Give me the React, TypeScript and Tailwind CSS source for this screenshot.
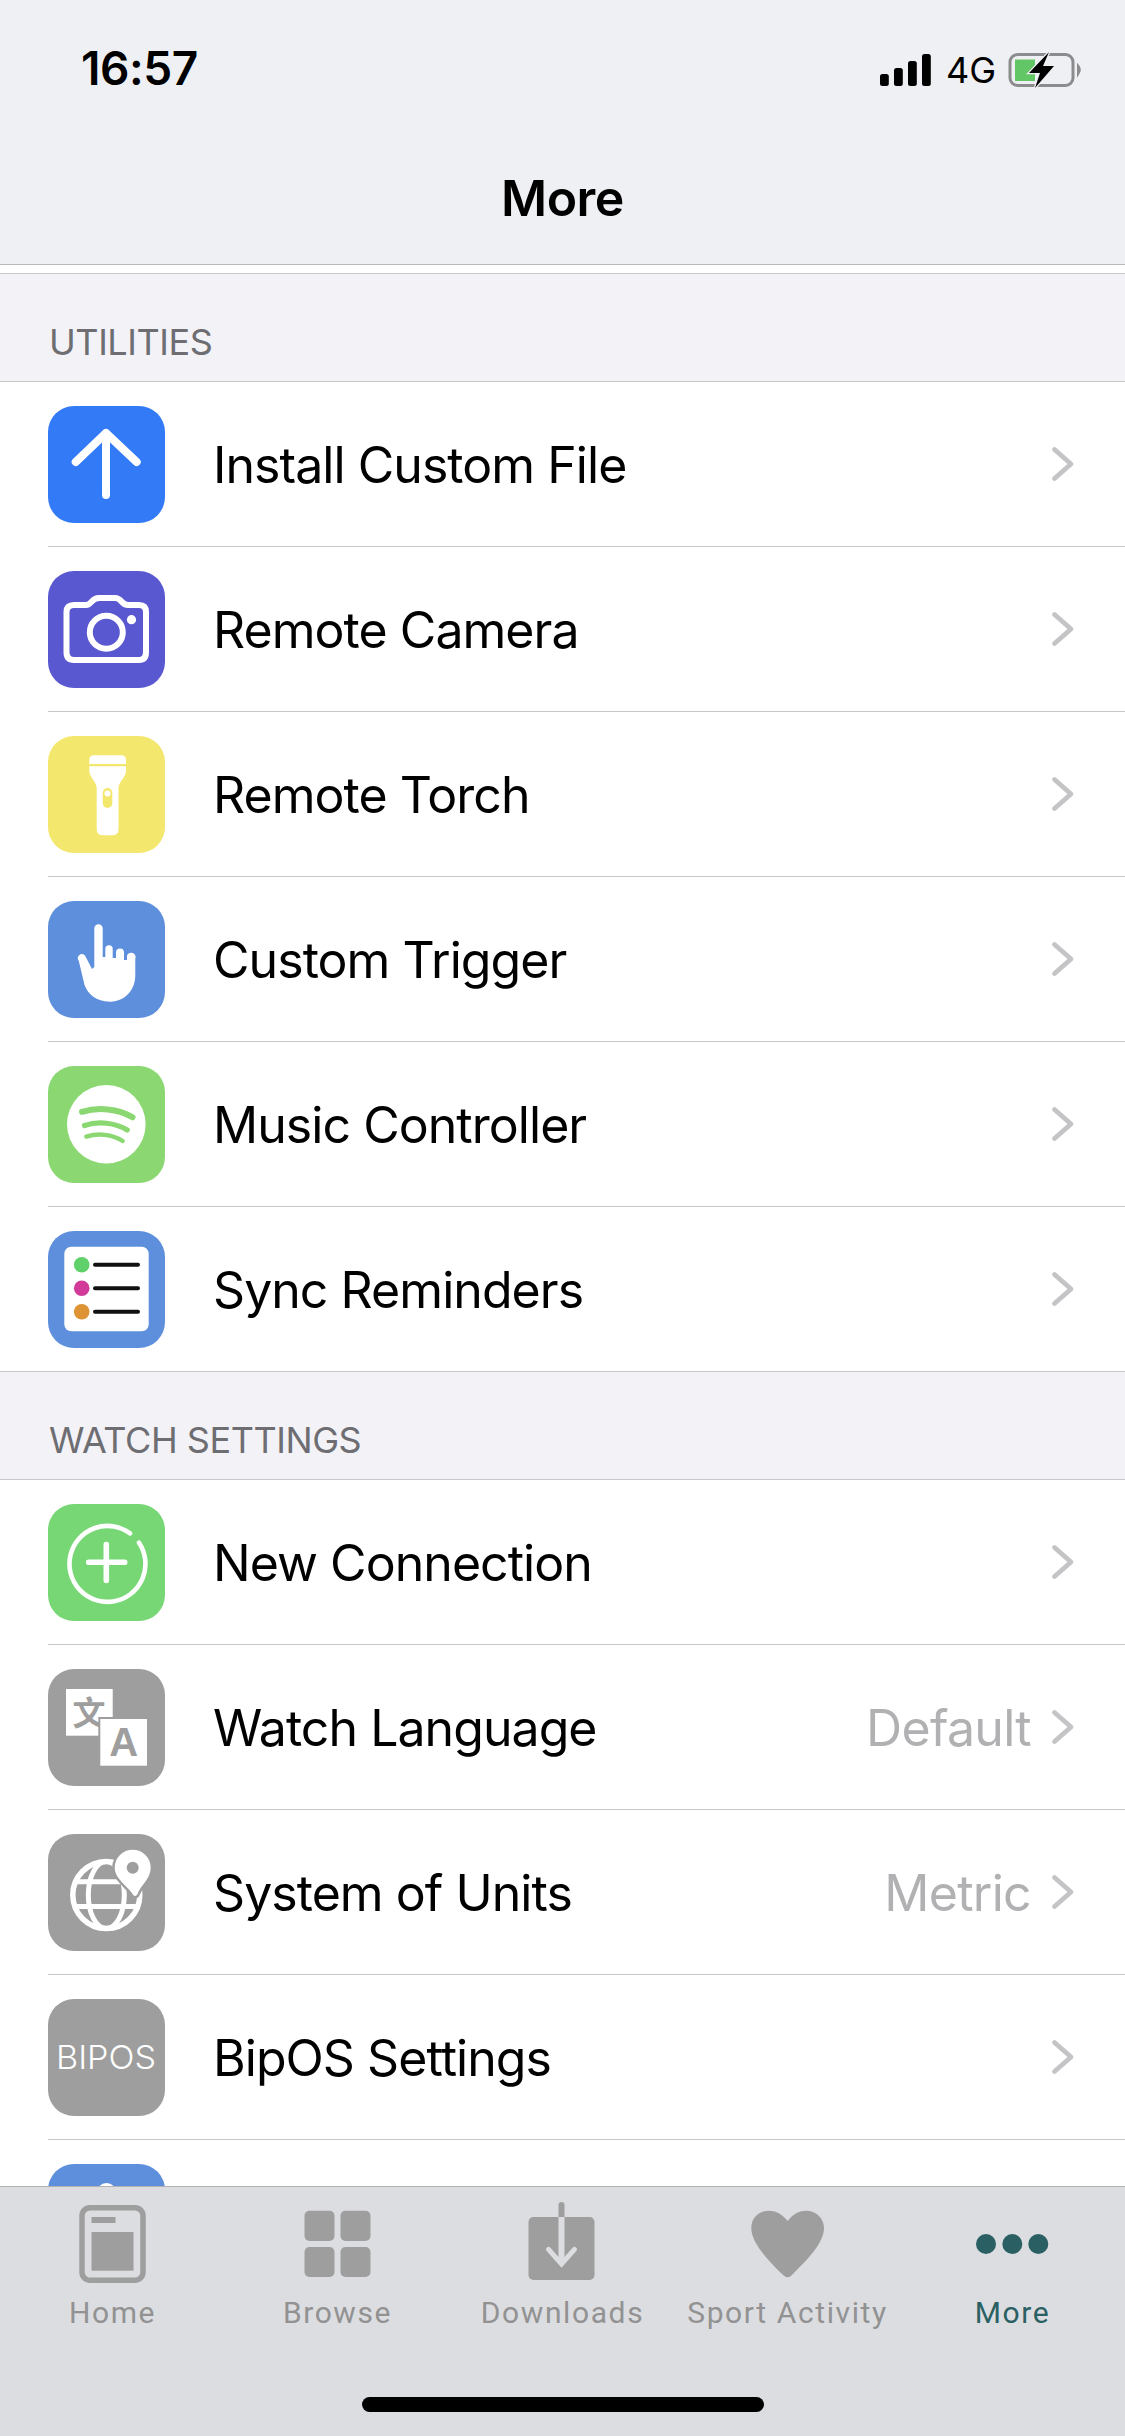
import type { ReactNode } from "react";

const Tile = ({ bg, children }: { bg: string; children: ReactNode }) => (
  <div className={`w-[117px] h-[117px] rounded-[26px] shrink-0 overflow-hidden ${bg}`}>
    <svg viewBox="0 0 117 117" className="w-full h-full block" fill="none">
      {children}
    </svg>
  </div>
);

const Upload = () => (
  <Tile bg="bg-[#337af7]">
    <path d="M27.7 56 58 27 88.7 56M58 27V89" stroke="#fff" strokeWidth="8" strokeLinecap="round" strokeLinejoin="round" />
  </Tile>
);
const Camera = () => (
  <Tile bg="bg-[#5a58d0]">
    <path d="M26 34H38C44 34 43 27 51 27H67C74 27 73 34 80 34H91Q98 34 98 41V81Q98 89 91 89H26Q18.5 89 18.5 81V41Q18.5 34 26 34Z" stroke="#fff" strokeWidth="6" />
    <circle cx="58.3" cy="61.3" r="16.5" stroke="#fff" strokeWidth="6" />
    <circle cx="83.5" cy="48.7" r="4.6" fill="#fff" />
  </Tile>
);
const Torch = () => (
  <Tile bg="bg-[#f4e76e]">
    <path d="M41.3 28V24Q41.3 19.3 46 19.3H73Q78 19.3 78 24V28Z" fill="#fff" />
    <path d="M41.3 30.3H78V35C78 41 70.5 46 70.5 52V93Q70.5 99.3 64 99.3H55Q48.7 99.3 48.7 93V52C48.7 46 41.3 41 41.3 35Z" fill="#fff" />
    <rect x="54.7" y="52" width="9.6" height="20" rx="4.8" fill="#f4e76e" />
    <circle cx="59.5" cy="57.5" r="3" fill="#fff" />
  </Tile>
);
const Hand = () => (
  <Tile bg="bg-[#5d8fdc]">
    <path
      d="M46.3 66V27.5A4.2 4.2 0 0 1 54.7 27.5V56H57.3V48A3.7 3.7 0 0 1 64.7 48V57H68V51.5A4 4 0 0 1 76 51.5V59H79V54.5A4.2 4.2 0 0 1 87.3 58V74C87.3 90 76 100.7 62 100.7C48 100.7 40 93 36.5 84L30.8 60A3.3 3.3 0 0 1 37 54.5L44 68Z"
      fill="#fff"
    />
  </Tile>
);
const Spotify = () => (
  <Tile bg="bg-[#8bd873]">
    <circle cx="58.3" cy="58.3" r="39.3" fill="#fff" />
    <path d="M34 45.8C50 41 70 42.5 84.5 51.3" stroke="#8bd873" strokeWidth="6" strokeLinecap="round" />
    <path d="M36.5 59.5C50 55 67 56.5 79.3 64" stroke="#8bd873" strokeWidth="5.2" strokeLinecap="round" />
    <path d="M38.3 70.6C50 67 64 68 74.7 75" stroke="#8bd873" strokeWidth="4.4" strokeLinecap="round" />
  </Tile>
);
const Reminders = () => (
  <Tile bg="bg-[#5d8fdc]">
    <rect x="16.3" y="15.7" width="84.4" height="84.6" rx="7" fill="#fff" />
    <circle cx="33.7" cy="33.7" r="7.8" fill="#5fd06a" />
    <circle cx="33.7" cy="57.3" r="7.8" fill="#d13a98" />
    <circle cx="33.7" cy="80.7" r="7.8" fill="#de9434" />
    <path d="M47 33.7H90M47 57.3H90M47 80.7H90" stroke="#111" strokeWidth="4" strokeLinecap="round" />
  </Tile>
);
const Plus = () => (
  <Tile bg="bg-[#77d775]">
    <path d="M82 29.3A38 38 0 1 0 91 38.7" stroke="#fff" strokeWidth="4.6" strokeLinecap="round" />
    <path d="M40.7 58.3H76.7M58.3 40.5V76.5" stroke="#fff" strokeWidth="5.6" strokeLinecap="round" />
  </Tile>
);
const Translate = () => (
  <Tile bg="bg-[#9e9e9e]">
    <rect x="18" y="20" width="46.7" height="46.7" fill="#fff" />
    <text x="41" y="56" textAnchor="middle" fontSize="33" fontWeight="700" fill="#9e9e9e" fontFamily="'Noto Sans CJK SC', sans-serif">文</text>
    <rect x="50.3" y="48" width="50.7" height="50.7" fill="#9e9e9e" />
    <rect x="52.3" y="50" width="46.7" height="46.7" fill="#fff" />
    <text x="75.6" y="87" textAnchor="middle" fontSize="40" fontWeight="700" fill="#9e9e9e" fontFamily="'Liberation Sans', sans-serif">A</text>
  </Tile>
);
const Globe = () => (
  <Tile bg="bg-[#9e9e9e]">
    <circle cx="58.3" cy="61" r="33.5" stroke="#fff" strokeWidth="5.5" />
    <ellipse cx="58.3" cy="61" rx="18" ry="33.5" stroke="#fff" strokeWidth="5" />
    <path d="M27 47.7H90M27 72.5H90" stroke="#fff" strokeWidth="5" />
    <path d="M85.3 61C81 53 66.7 45 66.7 33.7A18 18 0 0 1 102.7 33.7C102.7 45 92 52 90 59C89 62 86.5 63 85.3 61Z" fill="#fff" stroke="#9e9e9e" strokeWidth="5" paintOrder="stroke" />
    <circle cx="84.7" cy="33.7" r="6" fill="#9e9e9e" />
  </Tile>
);
const BipOS = () => (
  <Tile bg="bg-[#9e9e9e]">
    <text x="8" y="70" fontSize="33" fontWeight="300" fill="#fff" fontFamily="Inter, sans-serif" textLength="100" lengthAdjust="spacingAndGlyphs">BIPOS</text>
  </Tile>
);
const Partial = () => (
  <Tile bg="bg-[#5d8fdc]">
    <circle cx="58.5" cy="29" r="10" fill="#fff" />
  </Tile>
);

const Chevron = () => (
  <svg width="24" height="36" viewBox="0 0 24 36" fill="none" className="shrink-0">
    <path d="M3.5 3.5 20 18 3.5 32.5" stroke="#c4c4c7" strokeWidth="4.8" strokeLinecap="round" strokeLinejoin="round" />
  </svg>
);

const Row = ({ icon, label, value, last }: { icon: ReactNode; label: string; value?: string; last?: boolean }) => (
  <div className={`h-[165px] shrink-0 flex border-b border-[#c8c8ca] ${last ? "pl-0" : "ml-[48px]"}`}>
    <div className={`flex flex-1 items-center pr-[50px] ${last ? "pl-[48px]" : ""}`}>
      {icon}
      <span className="ml-[48px] pt-[2px] flex-1 text-[50px] text-black tracking-[-0.95px] leading-none">{label}</span>
      {value && <span className="mr-[20px] pt-[2px] text-[50px] text-[#b1b1b3] tracking-[-0.7px] leading-none">{value}</span>}
      <Chevron />
    </div>
  </div>
);

const Section = ({ title }: { title: string }) => (
  <div className="h-[108px] shrink-0 bg-[#f2f2f7] border-b border-[#c8c8ca] flex items-end pl-[49px] pb-[17px]">
    <span className="text-[36px] leading-[44px] text-[#6d6d72] tracking-[-0.45px]">{title}</span>
  </div>
);

const Tab = ({ label, active, children }: { label: string; active?: boolean; children: ReactNode }) => (
  <div className="flex flex-col items-center">
    <svg width="80" height="85" viewBox="0 0 80 85" fill="none" className="block">
      {children}
    </svg>
    <span
      className={`mt-[10px] text-[30px] leading-[36px] tracking-[1.6px] whitespace-nowrap font-['Roboto',sans-serif] ${active ? "text-[#2a6063]" : "text-[#929292]"}`}
    >
      {label}
    </span>
  </div>
);

export default function App() {
  return (
    <div className="w-[1125px] h-[2436px] flex flex-col overflow-hidden bg-white font-['Inter',sans-serif]">
      <header className="h-[265px] shrink-0 bg-[#eff0f3] border-b border-[#b9b9bb] flex flex-col">
        <div className="h-[138px] pt-[44px] pl-[81px] pr-[42px] flex items-start justify-between">
          <span className="text-[46px] leading-[48px] font-semibold text-black tracking-[-0.4px]">16:57</span>
          <div className="flex items-center pt-[8px]">
            <svg width="52" height="34" viewBox="0 0 52 34" fill="#000">
              <rect x="1" y="21" width="8.8" height="12" rx="2.5" />
              <rect x="15" y="15" width="8.8" height="18" rx="2.5" />
              <rect x="29" y="8" width="8.8" height="25" rx="2.5" />
              <rect x="43" y="1" width="8.8" height="32" rx="2.5" />
            </svg>
            <span className="ml-[15px] mr-[11px] text-[36px] leading-[36px] text-black">4G</span>
            <svg width="76" height="36" viewBox="0 0 76 36" fill="none">
              <rect x="3" y="2.5" width="63" height="31" rx="7.5" stroke="#8c8c8e" strokeWidth="3" />
              <path d="M8 7.5H28V29H8Z" fill="#63c666" />
              <path d="M71 13.5Q74.5 17.5 71 22.5Z" fill="#8c8c8e" stroke="#8c8c8e" strokeWidth="2" />
              <path d="M42 0 22 21H33L28 36 47 14H36Z" fill="#000" stroke="#eff0f3" strokeWidth="2.5" paintOrder="stroke" />
            </svg>
          </div>
        </div>
        <div className="flex-1 flex justify-center pt-[30px]">
          <span className="text-[50px] leading-[60px] font-semibold text-black tracking-[-0.5px]">More</span>
        </div>
      </header>

      <main className="flex-1 min-h-0 overflow-hidden flex flex-col">
        <div className="h-[9px] shrink-0 bg-white border-b border-[#c8c8ca]" />
        <Section title="UTILITIES" />
        <Row icon={<Upload />} label="Install Custom File" />
        <Row icon={<Camera />} label="Remote Camera" />
        <Row icon={<Torch />} label="Remote Torch" />
        <Row icon={<Hand />} label="Custom Trigger" />
        <Row icon={<Spotify />} label="Music Controller" />
        <Row icon={<Reminders />} label="Sync Reminders" last />
        <Section title="WATCH SETTINGS" />
        <Row icon={<Plus />} label="New Connection" />
        <Row icon={<Translate />} label="Watch Language" value="Default" />
        <Row icon={<Globe />} label="System of Units" value="Metric" />
        <Row icon={<BipOS />} label="BipOS Settings" />
        <Row icon={<Partial />} label="" />
      </main>

      <nav className="h-[250px] shrink-0 bg-[#dcdde0] border-t border-[#b2b2b2] relative">
        <div className="grid grid-cols-5 pt-[13px]">
          <Tab label="Home">
            <rect x="9" y="7.7" width="61" height="72.5" rx="8" stroke="#9e9e9e" strokeWidth="5.5" />
            <rect x="18.5" y="17" width="24" height="6" fill="#9e9e9e" />
            <rect x="18.5" y="32" width="42" height="38.7" fill="#9e9e9e" />
          </Tab>
          <Tab label="Browse">
            <rect x="6.5" y="10.7" width="30" height="30.3" rx="5" fill="#9e9e9e" />
            <rect x="42.5" y="10.7" width="30" height="30.3" rx="5" fill="#9e9e9e" />
            <rect x="6.5" y="47" width="30" height="30" rx="5" fill="#9e9e9e" />
            <rect x="42.5" y="47" width="30" height="30" rx="5" fill="#9e9e9e" />
          </Tab>
          <Tab label="Downloads">
            <rect x="5.5" y="17" width="66" height="63" rx="5" fill="#9e9e9e" />
            <path d="M38.5 5V17" stroke="#9e9e9e" strokeWidth="6" strokeLinecap="round" />
            <path d="M38.5 17V62" stroke="#dcdde0" strokeWidth="6" />
            <path d="M25.5 49.3 38.5 64 51.5 49.3" stroke="#dcdde0" strokeWidth="5" strokeLinecap="round" />
          </Tab>
          <Tab label="Sport Activity">
            <path d="M39.7 77.3C38 77.3 36 76 34 74C20 60 3.3 43 3.3 28C3.3 18 11 10.7 21 10.7C29 10.7 35 15 39.7 21C44 15 50 10.7 58 10.7C68 10.7 76 18 76 28C76 43 59 60 45 74C43 76 41.5 77.3 39.7 77.3Z" fill="#9e9e9e" />
          </Tab>
          <Tab label="More" active>
            <circle cx="13" cy="44" r="10" fill="#2a6063" />
            <circle cx="39.3" cy="44" r="10" fill="#2a6063" />
            <circle cx="65.3" cy="44" r="10" fill="#2a6063" />
          </Tab>
        </div>
        <div className="absolute left-[362px] bottom-[24px] w-[402px] h-[15px] rounded-full bg-black" />
      </nav>
    </div>
  );
}
